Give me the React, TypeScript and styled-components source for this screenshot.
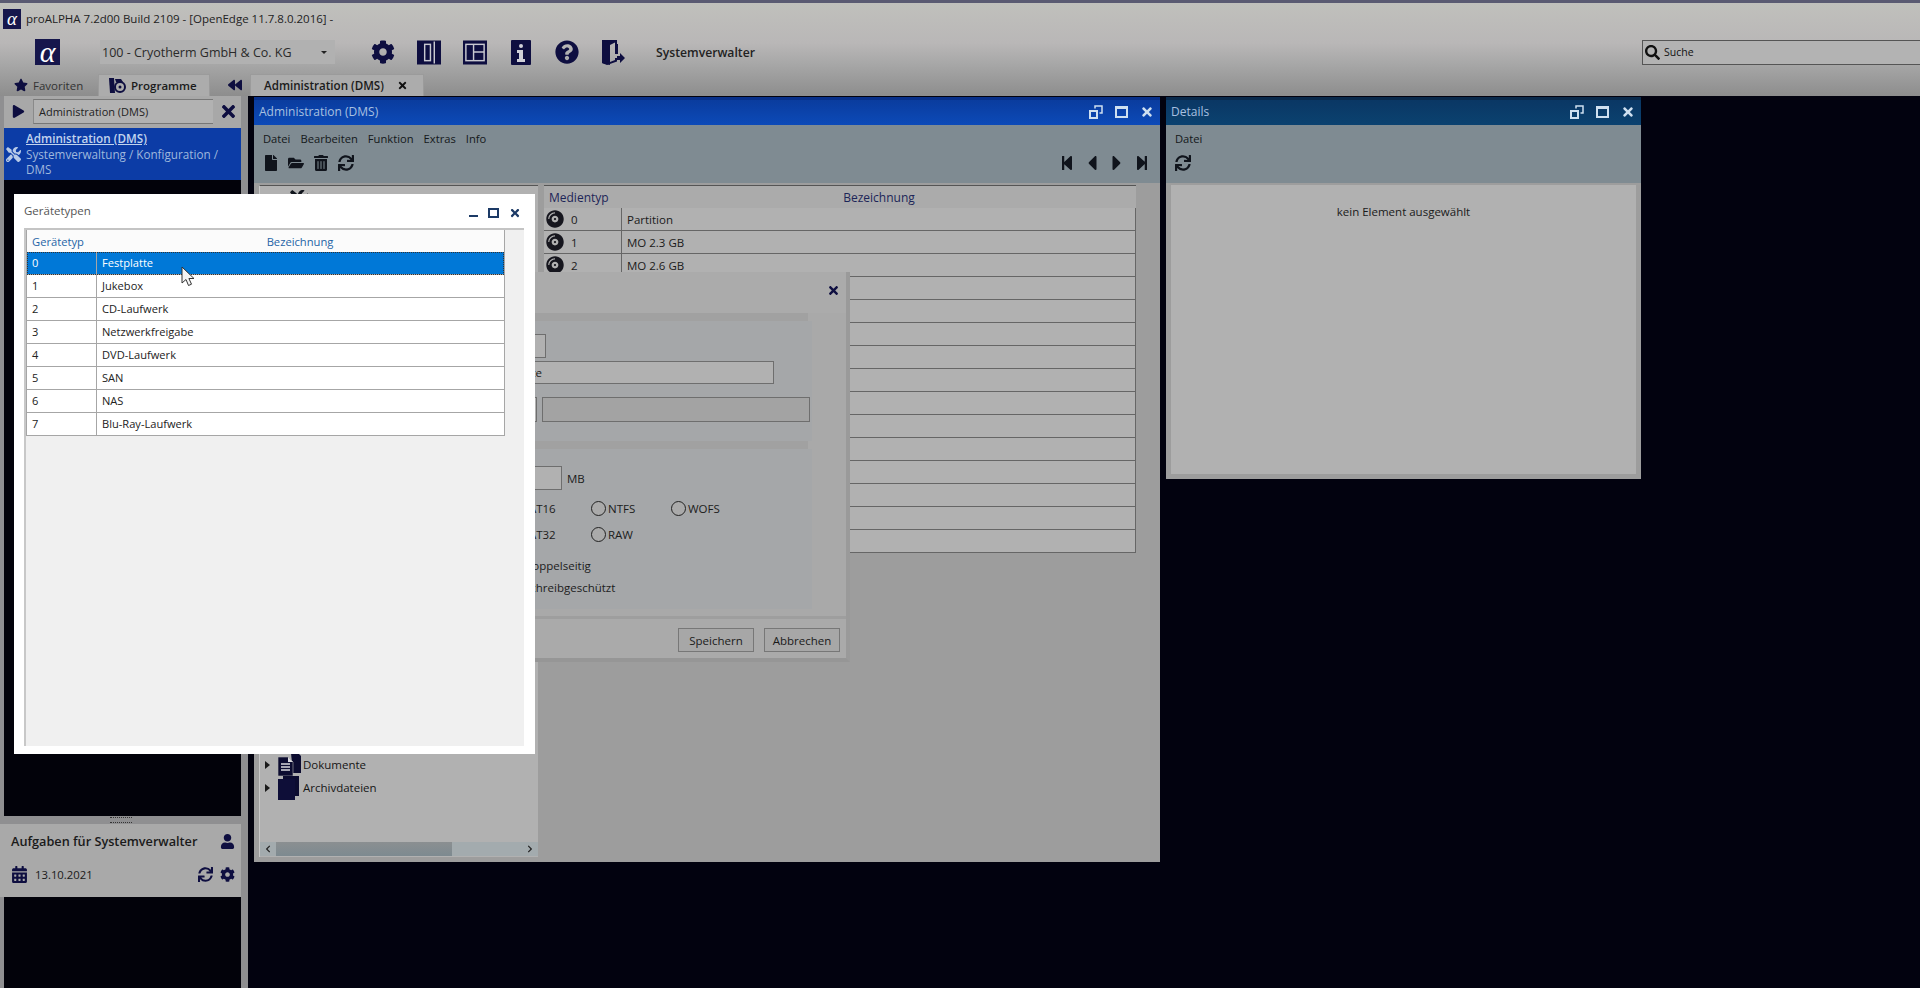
import React from "react";
import styled, { createGlobalStyle } from "styled-components";
import {
  FaCog,
  FaStar,
  FaPlay,
  FaTimes,
  FaQuestionCircle,
  FaTools,
  FaUser,
  FaCalendarAlt,
  FaSync,
  FaFile,
  FaFolderOpen,
  FaTrashAlt,
  FaStepBackward,
  FaStepForward,
  FaCaretLeft,
  FaCaretRight,
  FaCompactDisc,
  FaSearch,
  FaBackward,
  FaChevronLeft,
  FaChevronRight,
} from "react-icons/fa";

const navy = "#0e0e40";

const GlobalStyle = createGlobalStyle`
  html, body {
    margin: 0;
    padding: 0;
    background: #02020f;
    overflow: hidden;
  }
  * {
    box-sizing: border-box;
  }
`;

const Page = styled.div`
  position: relative;
  width: 1920px;
  height: 988px;
  display: flex;
  flex-direction: column;
  overflow: hidden;
  background: #02020f;
  font-family: "Open Sans", "Noto Sans", sans-serif;
  font-size: 11.5px;
  color: #1c1c1c;
`;

/* header */
const Header = styled.header`
  height: 96px;
  flex: none;
  display: flex;
  flex-direction: column;
  border-top: 3px solid #5a5a72;
  background: linear-gradient(#c0c0bc 0, #b9b7b7 40px, #a8a8a8 60px, #8d8d8d 100%);
`;

const TitleRow = styled.div`
  height: 31px;
  flex: none;
  display: flex;
  align-items: center;
  gap: 5px;
  padding: 0 0 0 3px;
  font-size: 11.5px;
  color: #222;
`;

const SmallLogo = styled.div`
  width: 18px;
  height: 20px;
  display: flex;
  align-items: center;
  justify-content: center;
  background: #16164c;
  color: #fff;
  font-family: "Liberation Serif", serif;
  font-style: italic;
  font-size: 19px;
  line-height: 1;
`;

const ToolRow = styled.div`
  height: 40px;
  flex: none;
  display: flex;
  align-items: center;
  padding: 0 0 4px 35px;
`;

const BigLogo = styled(SmallLogo)`
  width: 25px;
  height: 26px;
  font-size: 30px;
  margin-right: 40px;
`;

const CompanySelect = styled.div`
  width: 235px;
  height: 24px;
  display: flex;
  align-items: center;
  justify-content: space-between;
  padding: 0 8px 0 2px;
  background: #b1b1b1;
  font-size: 12.5px;
  color: #2a2a2a;
  margin-right: 36px;
`;

const SelectArrow = styled.span`
  width: 0;
  height: 0;
  border-left: 3px solid transparent;
  border-right: 3px solid transparent;
  border-top: 3px solid #222;
`;

const ToolIcons = styled.div`
  display: flex;
  align-items: center;
  gap: 22px;
`;

const ToolIcon = styled.div`
  width: 24px;
  height: 26px;
  display: flex;
  align-items: center;
  justify-content: center;
  color: ${navy};
  font-size: 24px;
`;

const UserName = styled.div`
  margin-left: 31px;
  font-size: 12.2px;
  font-weight: 600;
  color: #222;
`;

const SearchBox = styled.div`
  width: 278px;
  height: 25px;
  margin-left: auto;
  display: flex;
  align-items: center;
  gap: 4px;
  padding-left: 2px;
  border: 1px solid #555;
  border-right: 0;
  background: #b3b3b3;
  font-size: 10.5px;
  color: #111;
  svg {
    font-size: 15px;
    color: #111;
  }
`;

const TabRow = styled.div`
  height: 22px;
  flex: none;
  display: flex;
  align-items: flex-end;
`;

const LeftTabs = styled.div`
  width: 250px;
  height: 100%;
  flex: none;
  display: flex;
  align-items: flex-end;
  padding-left: 10px;
`;

const Tab = styled.div<{ $active?: boolean }>`
  height: 100%;
  display: flex;
  align-items: center;
  gap: 5px;
  padding: 0 ${(p) => (p.$active ? "12px 0 10px" : "4px")};
  background: ${(p) => (p.$active ? "#acacac" : "transparent")};
  border: ${(p) => (p.$active ? "1px solid #9b9b9b" : "0")};
  border-bottom: 0;
  font-size: 11.5px;
  font-weight: ${(p) => (p.$active ? 600 : 400)};
  color: ${(p) => (p.$active ? "#1b1b1b" : "#333")};
  svg {
    color: ${navy};
    font-size: 14px;
  }
`;

const FavoritesTab = styled(Tab)`
  width: 88px;
`;

const DocumentTab = styled(Tab)`
  padding-left: 13px;
  font-size: 11.6px;
`;

const CollapseButton = styled.div`
  margin: 0 8px 4px auto;
  color: ${navy};
  font-size: 14px;
  display: flex;
`;

const TabClose = styled.span`
  display: flex;
  margin: 0 3px 0 8px;
  svg {
    font-size: 11px;
    color: #111;
  }
`;

/* body */
const Body = styled.main`
  flex: 1;
  display: flex;
  min-height: 0;
`;

const Sidebar = styled.aside`
  width: 250px;
  flex: none;
  display: flex;
  flex-direction: column;
  background: #8f8f91;
  padding: 0 7px 0 4px;
  border-right: 2px solid #02020f;
`;

const SearchRow = styled.div`
  height: 32px;
  flex: none;
  display: flex;
  align-items: center;
  background: #a8a8a8;
  padding: 0 0 1px 8px;
  color: ${navy};
`;

const FilterInput = styled.div`
  width: 180px;
  height: 25px;
  margin: 0 6px 0 8px;
  display: flex;
  align-items: center;
  padding-left: 5px;
  background: #b2b2b2;
  border-top: 1px solid #777;
  border-bottom: 1px solid #777;
  border-left: 1px solid #8a8a8a;
  font-size: 11px;
  color: #222;
`;

const ProgramItem = styled.div`
  height: 52px;
  flex: none;
  position: relative;
  padding: 3px 8px 0 22px;
  background: #0c3ca6;
  color: #9fb8dd;
  line-height: 15.5px;
  font-size: 11.7px;
  strong {
    display: block;
    color: #c2d4ee;
    font-weight: 600;
    text-decoration: underline;
  }
`;

const ProgramIcon = styled.span`
  position: absolute;
  left: 2px;
  top: 19px;
  display: flex;
  font-size: 15px;
  color: #b8cbe8;
`;

const BlackFill = styled.div<{ $height?: number }>`
  flex: ${(p) => (p.$height ? "none" : 1)};
  height: ${(p) => (p.$height ? `${p.$height}px` : "auto")};
  background: #02020a;
`;

const Splitter = styled.div`
  height: 8px;
  flex: none;
  display: flex;
  align-items: center;
  justify-content: center;
  margin-left: -4px;
  &::after {
    content: "";
    width: 22px;
    height: 4px;
    border-top: 1px dotted #333;
    border-bottom: 1px dotted #333;
  }
`;

const TaskPanel = styled.section`
  height: 73px;
  flex: none;
  background: #a9a9a9;
  margin-left: -4px;
  padding: 0 6px 0 11px;
  display: flex;
  flex-direction: column;
`;

const TaskRow = styled.div<{ $height: number }>`
  height: ${(p) => p.$height}px;
  flex: none;
  display: flex;
  align-items: center;
  gap: 7px;
`;

const TaskTitle = styled.div`
  flex: 1;
  font-size: 12.7px;
  font-weight: 600;
  white-space: nowrap;
  color: #1a1a1a;
`;

const TaskDate = styled.div`
  flex: 1;
  font-size: 11.3px;
  white-space: nowrap;
  color: #1a1a1a;
`;

const TaskIcon = styled.span<{ $large?: boolean }>`
  display: flex;
  color: ${navy};
  font-size: ${(p) => (p.$large ? "17px" : "15px")};
`;

const Desktop = styled.div`
  position: relative;
  flex: 1;
`;

const Win = styled.section<{ $left: number; $width: number; $height: number }>`
  position: absolute;
  top: 1px;
  left: ${(p) => p.$left}px;
  width: ${(p) => p.$width}px;
  height: ${(p) => p.$height}px;
  display: flex;
  flex-direction: column;
  background: #9c9c9c;
`;

const WinTitle = styled.div<{ $dark?: boolean }>`
  height: 28px;
  flex: none;
  display: flex;
  align-items: center;
  justify-content: space-between;
  padding: 0 6px 2px 5px;
  border-top: 3px solid ${(p) => (p.$dark ? "#0a2a4c" : "#08308a")};
  background: ${(p) =>
    p.$dark ? "linear-gradient(#0a3764, #0b4270)" : "linear-gradient(#0a3c9e, #0c4ab8)"};
  color: #a8c0e0;
  font-size: 12px;
`;

const WinButtons = styled.div`
  display: flex;
  align-items: center;
  gap: 12px;
  color: #cfe0f0;
  font-size: 14px;
  svg {
    display: block;
  }
`;

const MaxBox = styled.span`
  width: 13px;
  height: 12px;
  border: 1px solid #cfe0f0;
  border-width: 3px 2px 2px;
`;

const MenuArea = styled.div`
  height: 58px;
  flex: none;
  background: #7f8b92;
  display: flex;
  flex-direction: column;
  padding: 1px 6px 0 9px;
`;

const MenuBar = styled.nav`
  height: 24px;
  display: flex;
  align-items: center;
  gap: 10px;
  font-size: 11.2px;
  color: #14181a;
`;

const IconBar = styled.div`
  height: 26px;
  display: flex;
  align-items: center;
  gap: 9px;
  font-size: 16px;
  color: #10141c;
`;

const NavIcons = styled.div`
  margin-left: auto;
  display: flex;
  align-items: center;
`;

const NavIcon = styled.span<{ $big?: boolean }>`
  width: 25px;
  display: flex;
  justify-content: center;
  font-size: ${(p) => (p.$big ? "24px" : "16px")};
`;

const WinBody = styled.div`
  flex: 1;
  min-height: 0;
  display: flex;
  gap: 6px;
  padding: 2px 5px 5px 5px;
  background: #9d9d9d;
`;

const Tree = styled.div`
  width: 279px;
  flex: none;
  display: flex;
  flex-direction: column;
  background: #b1b1b1;
  border-left: 1px solid #c8c8c8;
  border-top: 1px solid #555;
  position: relative;
`;

const TreeHeadIcon = styled.div`
  padding: 4px 0 0 30px;
  font-size: 18px;
  color: #10141c;
  display: flex;
`;

const TreeRow = styled.div<{ $first?: boolean }>`
  height: 23px;
  flex: none;
  display: flex;
  align-items: center;
  margin-top: ${(p) => (p.$first ? "auto" : "0")};
  padding-left: 5px;
  font-size: 11.5px;
  color: #161616;
`;

const TreeArrow = styled.span`
  width: 0;
  height: 0;
  margin-right: 7px;
  border-top: 4px solid transparent;
  border-bottom: 4px solid transparent;
  border-left: 5px solid #1a1a1a;
`;

const TreeIcon = styled.span`
  display: flex;
  width: 24px;
  margin-right: 2px;
`;

const ScrollBar = styled.div`
  height: 14px;
  flex: none;
  display: flex;
  align-items: center;
  margin-top: 43px;
  margin-bottom: 1px;
  background: #a3abae;
  color: #222;
  font-size: 8px;
  svg {
    flex: none;
    margin: 0 4px;
  }
`;

const ScrollThumb = styled.div`
  width: 176px;
  height: 100%;
  margin-right: auto;
  background: linear-gradient(#8b8f91, #7d8a90);
`;

const ListPanel = styled.div`
  flex: 1;
  min-width: 0;
  padding-right: 19px;
`;

const ListHead = styled.div`
  height: 23px;
  display: grid;
  grid-template-columns: 78px 1fr;
  align-items: center;
  background: #ababab;
  border-top: 1px solid #555;
  color: #1c2558;
  font-size: 12px;
`;

const HeadCell = styled.div<{ $center?: boolean }>`
  padding-left: ${(p) => (p.$center ? 0 : "5px")};
  text-align: ${(p) => (p.$center ? "center" : "left")};
`;

const ListRow = styled.div`
  height: 23px;
  display: grid;
  grid-template-columns: 78px 1fr;
  align-items: center;
  background: #b1b1b1;
  border-bottom: 1px solid #666;
  border-right: 1px solid #666;
  font-size: 11.5px;
  color: #1a1a1a;
`;

const MediaCell = styled.div`
  height: 100%;
  display: flex;
  align-items: center;
  gap: 7px;
  padding-left: 2px;
  border-right: 1px solid #666;
  svg {
    font-size: 18px;
    color: #16161e;
  }
`;

const TextCell = styled.div`
  padding-left: 5px;
`;

const EmptyDetails = styled.div`
  flex: 1;
  padding-top: 19px;
  text-align: center;
  background: #b1b1b1;
  font-size: 11.5px;
  color: #1a1a1a;
`;

/* dialog behind the white list */
const Dialog = styled.section`
  position: absolute;
  left: 440px;
  top: 272px;
  width: 410px;
  height: 390px;
  display: flex;
  flex-direction: column;
  background: #a9a9a9;
  border-right: 4px solid #9a9a9a;
  border-bottom: 4px solid #969696;
`;

const DialogHead = styled.div`
  height: 41px;
  flex: none;
  display: flex;
  align-items: center;
  justify-content: flex-end;
  padding: 0 6px 5px 0;
  background: #ababab;
  color: ${navy};
  font-size: 13px;
`;

const GroupTitle = styled.div`
  height: 8px;
  flex: none;
  margin-right: 38px;
  background: #a1a1a1;
`;

const Group = styled.div<{ $height: number }>`
  height: ${(p) => p.$height}px;
  flex: none;
  margin-right: 34px;
  background: #a5a7a9;
  padding-left: 40px;
  display: flex;
  flex-direction: column;
`;

const FieldRow = styled.div<{ $top: number }>`
  display: flex;
  align-items: center;
  gap: 5px;
  margin-top: ${(p) => p.$top}px;
  font-size: 11.5px;
  color: #1c1c1c;
`;

const Field = styled.div<{ $width: number; $height: number; $dim?: boolean }>`
  width: ${(p) => p.$width}px;
  height: ${(p) => p.$height}px;
  flex: none;
  display: flex;
  align-items: center;
  padding-left: 8px;
  background: ${(p) => (p.$dim ? "#a3a3a3" : "#b1b1b1")};
  border: 1px solid #6e6e6e;
  font-size: 11.5px;
`;

const RadioGrid = styled.div`
  display: grid;
  grid-template-columns: 85px 80px 80px;
  row-gap: 10px;
  margin-top: 10px;
  margin-left: 26px;
  font-size: 11.5px;
`;

const RadioItem = styled.div`
  height: 16px;
  display: flex;
  align-items: center;
  gap: 2px;
  &::before {
    content: "";
    width: 13px;
    height: 13px;
    border: 1.5px solid #222;
    border-radius: 50%;
    background: #aaa;
  }
`;

const CheckItem = styled.div<{ $top: number }>`
  margin-top: ${(p) => p.$top}px;
  margin-left: 24px;
  font-size: 11.5px;
  display: flex;
  align-items: center;
  gap: 5px;
  &::before {
    content: "";
    width: 13px;
    height: 13px;
    border: 1px solid #333;
  }
`;

const DialogFooter = styled.div`
  margin-top: auto;
  height: 42px;
  flex: none;
  display: flex;
  align-items: flex-start;
  justify-content: flex-end;
  gap: 10px;
  padding: 9px 6px 0 0;
  background: #aaaaaa;
  border-top: 3px solid #9e9e9e;
`;

const DialogButton = styled.div`
  width: 76px;
  height: 24px;
  display: flex;
  align-items: center;
  justify-content: center;
  background: #a7a7a7;
  border: 1px solid #777;
  font-size: 11.5px;
  color: #1a1a1a;
`;

/* active white window */
const DeviceWindow = styled.section`
  position: absolute;
  left: 14px;
  top: 194px;
  width: 521px;
  height: 560px;
  display: flex;
  flex-direction: column;
  background: #fff;
  padding: 0 11px 8px 10px;
`;

const DeviceTitle = styled.div`
  height: 34px;
  flex: none;
  display: flex;
  align-items: center;
  justify-content: space-between;
  padding: 0 3px 2px 0;
  font-size: 11.5px;
  color: #555;
`;

const DeviceButtons = styled(WinButtons)`
  gap: 10px;
  color: #1c3a66;
  font-size: 12px;
  padding-top: 5px;
`;

const MinLine = styled.span`
  width: 9px;
  height: 2px;
  margin-top: 6px;
  background: #1c3a66;
`;

const DarkMax = styled(MaxBox)`
  width: 11px;
  height: 10px;
  border-color: #1c3a66;
  border-width: 2px 2px 2px;
`;

const DevicePanel = styled.div`
  flex: 1;
  padding: 0 19px 0 0;
  background: #f0f0f0;
  border-top: 2px solid #c4c4c4;
  border-left: 2px solid #c8c8c8;
`;

const DeviceTable = styled.div`
  display: flex;
  flex-direction: column;
  border-left: 1px solid #a6a6a6;
  border-right: 1px solid #a6a6a6;
`;

const DeviceHead = styled.div`
  height: 22px;
  display: grid;
  grid-template-columns: 69px 1fr;
  align-items: center;
  background: #fbfbfb;
  color: #2564a6;
  font-size: 11.2px;
`;

const DeviceRow = styled.div<{ $selected?: boolean }>`
  height: 23px;
  display: grid;
  grid-template-columns: 69px 1fr;
  align-items: center;
  background: ${(p) => (p.$selected ? "#0078d7" : "#fff")};
  color: ${(p) => (p.$selected ? "#fff" : "#222")};
  outline: ${(p) => (p.$selected ? "1px dotted #333" : "none")};
  outline-offset: -1px;
  border-bottom: 1px solid #a6a6a6;
  font-size: 11.1px;
`;

const DeviceCell = styled.div`
  height: 100%;
  display: flex;
  align-items: center;
  padding: 0 0 1px 5px;
  & + & {
    border-left: 1px solid #a6a6a6;
  }
`;

const Pointer = styled.svg`
  position: absolute;
  left: 181px;
  top: 266px;
  width: 15px;
  height: 22px;
`;

const PanelIcon = ({ inner }: { inner: "left" | "grid" }) => (
  <svg width="25" height="25" viewBox="0 0 25 25">
    <rect width="25" height="25" fill={navy} />
    {inner === "left" ? (
      <g fill="none" stroke="#c8c8d0" strokeWidth="1.5">
        <rect x="8" y="4" width="6" height="17" />
        <path d="M18 1v23" />
      </g>
    ) : (
      <g fill="none" stroke="#c8c8d0" strokeWidth="1.5">
        <rect x="3" y="4" width="19" height="17" />
        <path d="M11 4v17M11 12h11" />
      </g>
    )}
  </svg>
);

const InfoIcon = () => (
  <svg width="20" height="25" viewBox="0 0 20 25">
    <rect width="20" height="25" rx="1" fill={navy} />
    <circle cx="10" cy="6" r="2" fill="#d0d0d8" />
    <path d="M6 10h6v9h2v3H6v-3h2v-6H6z" fill="#d0d0d8" />
  </svg>
);

const DoorIcon = () => (
  <svg width="24" height="26" viewBox="0 0 24 26">
    <path d="M1 1h15v14h-2V3.5L9 6v17l5-2v-2h2v3.5L6 26 1 24z" fill={navy} />
    <path d="M1 1l8 3v22l-8-2z" fill={navy} />
    <path d="M16 17h3v-3l5 5-5 5v-3h-3z" fill={navy} />
    <rect x="14" y="5" width="3" height="10" fill={navy} />
  </svg>
);

const BookDiscIcon = () => (
  <svg width="17" height="17" viewBox="0 0 17 17">
    <path d="M0 1h5l1 15H1z" fill={navy} />
    <circle cx="11" cy="10" r="5" fill="none" stroke={navy} strokeWidth="2" />
    <circle cx="11" cy="10" r="1.5" fill={navy} />
    <path d="M6 2h6l2 3H7z" fill={navy} />
  </svg>
);

const DocumentsIcon = () => (
  <svg width="24" height="24" viewBox="0 0 24 24">
    <path d="M14 0h7l3 3v17h-8z" fill="#0c0c30" />
    <path d="M1 4h10l5 5v14H1z" fill="#0c0c30" stroke="#b1b1b1" strokeWidth="0.6" />
    <path d="M11 4v5h5" fill="#d8d8dc" />
    <path d="M4 11h9M4 14h9M4 17h9" stroke="#d8d8dc" strokeWidth="1.3" />
  </svg>
);

const ArchiveIcon = () => (
  <svg width="24" height="24" viewBox="0 0 24 24">
    <path d="M6 0h16v20h-4V4H6z" fill="#0c0c30" />
    <rect x="1" y="3" width="17" height="21" fill="#0e0e38" />
  </svg>
);

const RestoreIcon = () => (
  <svg width="14" height="14" viewBox="0 0 14 14" fill="none" stroke="currentColor">
    <rect x="1" y="6" width="7" height="7" strokeWidth="2" />
    <path d="M6 3.5V1h7v7h-2.5" strokeWidth="1.5" />
  </svg>
);

const WindowControls = () => (
  <WinButtons>
    <RestoreIcon />
    <MaxBox />
    <FaTimes />
  </WinButtons>
);

const mediaRows = ["Partition", "MO 2.3 GB", "MO 2.6 GB"];
const emptyRows = Array.from({ length: 12 }, (_, i) => i);
const deviceRows = [
  "Festplatte",
  "Jukebox",
  "CD-Laufwerk",
  "Netzwerkfreigabe",
  "DVD-Laufwerk",
  "SAN",
  "NAS",
  "Blu-Ray-Laufwerk",
];

export default function App() {
  return (
    <Page>
      <GlobalStyle />
      <Header>
        <TitleRow>
          <SmallLogo>α</SmallLogo>
          proALPHA 7.2d00 Build 2109 - [OpenEdge 11.7.8.0.2016] -
        </TitleRow>
        <ToolRow>
          <BigLogo>α</BigLogo>
          <CompanySelect>
            100 - Cryotherm GmbH &amp; Co. KG
            <SelectArrow />
          </CompanySelect>
          <ToolIcons>
            <ToolIcon><FaCog /></ToolIcon>
            <ToolIcon><PanelIcon inner="left" /></ToolIcon>
            <ToolIcon><PanelIcon inner="grid" /></ToolIcon>
            <ToolIcon><InfoIcon /></ToolIcon>
            <ToolIcon><FaQuestionCircle /></ToolIcon>
            <ToolIcon><DoorIcon /></ToolIcon>
          </ToolIcons>
          <UserName>Systemverwalter</UserName>
          <SearchBox>
            <FaSearch />
            Suche
          </SearchBox>
        </ToolRow>
        <TabRow>
          <LeftTabs>
            <FavoritesTab>
              <FaStar />
              Favoriten
            </FavoritesTab>
            <Tab $active>
              <BookDiscIcon />
              Programme
            </Tab>
            <CollapseButton><FaBackward /></CollapseButton>
          </LeftTabs>
          <DocumentTab $active>
            Administration (DMS)
            <TabClose><FaTimes /></TabClose>
          </DocumentTab>
        </TabRow>
      </Header>
      <Body>
        <Sidebar>
          <SearchRow>
            <FaPlay size={13} />
            <FilterInput>Administration (DMS)</FilterInput>
            <FaTimes size={19} />
          </SearchRow>
          <ProgramItem>
            <ProgramIcon><FaTools /></ProgramIcon>
            <strong>Administration (DMS)</strong>
            Systemverwaltung / Konfiguration / DMS
          </ProgramItem>
          <BlackFill />
          <Splitter />
          <TaskPanel>
            <TaskRow $height={34}>
              <TaskTitle>Aufgaben für Systemverwalter</TaskTitle>
              <TaskIcon><FaUser /></TaskIcon>
            </TaskRow>
            <TaskRow $height={33}>
              <TaskIcon $large><FaCalendarAlt /></TaskIcon>
              <TaskDate>13.10.2021</TaskDate>
              <TaskIcon><FaSync /></TaskIcon>
              <TaskIcon><FaCog /></TaskIcon>
            </TaskRow>
          </TaskPanel>
          <BlackFill $height={91} />
        </Sidebar>
        <Desktop>
          <Win $left={4} $width={906} $height={765}>
            <WinTitle>
              Administration (DMS)
              <WindowControls />
            </WinTitle>
            <MenuArea>
              <MenuBar>
                <span>Datei</span>
                <span>Bearbeiten</span>
                <span>Funktion</span>
                <span>Extras</span>
                <span>Info</span>
              </MenuBar>
              <IconBar>
                <FaFile />
                <FaFolderOpen />
                <FaTrashAlt />
                <FaSync />
                <NavIcons>
                  <NavIcon><FaStepBackward /></NavIcon>
                  <NavIcon $big><FaCaretLeft /></NavIcon>
                  <NavIcon $big><FaCaretRight /></NavIcon>
                  <NavIcon><FaStepForward /></NavIcon>
                </NavIcons>
              </IconBar>
            </MenuArea>
            <WinBody>
              <Tree>
                <TreeHeadIcon><FaTools /></TreeHeadIcon>
                <TreeRow $first>
                  <TreeArrow />
                  <TreeIcon><DocumentsIcon /></TreeIcon>
                  Dokumente
                </TreeRow>
                <TreeRow>
                  <TreeArrow />
                  <TreeIcon><ArchiveIcon /></TreeIcon>
                  Archivdateien
                </TreeRow>
                <ScrollBar>
                  <FaChevronLeft />
                  <ScrollThumb />
                  <FaChevronRight />
                </ScrollBar>
              </Tree>
              <ListPanel>
                <ListHead>
                  <HeadCell>Medientyp</HeadCell>
                  <HeadCell $center>Bezeichnung</HeadCell>
                </ListHead>
                {mediaRows.map((name, i) => (
                  <ListRow key={name}>
                    <MediaCell>
                      <FaCompactDisc />
                      {i}
                    </MediaCell>
                    <TextCell>{name}</TextCell>
                  </ListRow>
                ))}
                {emptyRows.map((i) => (
                  <ListRow key={i} />
                ))}
              </ListPanel>
            </WinBody>
          </Win>
          <Win $left={916} $width={475} $height={382}>
            <WinTitle $dark>
              Details
              <WindowControls />
            </WinTitle>
            <MenuArea>
              <MenuBar>
                <span>Datei</span>
              </MenuBar>
              <IconBar>
                <FaSync />
              </IconBar>
            </MenuArea>
            <WinBody>
              <EmptyDetails>kein Element ausgewählt</EmptyDetails>
            </WinBody>
          </Win>
        </Desktop>
      </Body>

      <Dialog>
        <DialogHead><FaTimes /></DialogHead>
        <GroupTitle />
        <Group $height={120}>
          <FieldRow $top={13}><Field $width={66} $height={24} /></FieldRow>
          <FieldRow $top={3}><Field $width={294} $height={23}>Festplatte</Field></FieldRow>
          <FieldRow $top={13}>
            <Field $width={57} $height={25} />
            <Field $width={268} $height={25} $dim />
          </FieldRow>
        </Group>
        <GroupTitle />
        <Group $height={160}>
          <FieldRow $top={17}>
            <Field $width={82} $height={24} />
            MB
          </FieldRow>
          <RadioGrid>
            <RadioItem>FAT16</RadioItem>
            <RadioItem>NTFS</RadioItem>
            <RadioItem>WOFS</RadioItem>
            <RadioItem>FAT32</RadioItem>
            <RadioItem>RAW</RadioItem>
          </RadioGrid>
          <CheckItem $top={16}>Doppelseitig</CheckItem>
          <CheckItem $top={7}>Schreibgeschützt</CheckItem>
        </Group>
        <DialogFooter>
          <DialogButton>Speichern</DialogButton>
          <DialogButton>Abbrechen</DialogButton>
        </DialogFooter>
      </Dialog>

      <DeviceWindow>
        <DeviceTitle>
          Gerätetypen
          <DeviceButtons>
            <MinLine />
            <DarkMax />
            <FaTimes />
          </DeviceButtons>
        </DeviceTitle>
        <DevicePanel>
          <DeviceTable>
            <DeviceHead>
              <HeadCell>Gerätetyp</HeadCell>
              <HeadCell $center>Bezeichnung</HeadCell>
            </DeviceHead>
            {deviceRows.map((name, i) => (
              <DeviceRow key={name} $selected={i === 0}>
                <DeviceCell>{i}</DeviceCell>
                <DeviceCell>{name}</DeviceCell>
              </DeviceRow>
            ))}
          </DeviceTable>
        </DevicePanel>
      </DeviceWindow>

      <Pointer viewBox="0 0 15 22">
        <path d="M1 1v16l4-3.5 2.5 6 3-1.3-2.6-5.7H13z" fill="#f4f4f4" stroke="#333" strokeWidth="1" />
      </Pointer>
    </Page>
  );
}
